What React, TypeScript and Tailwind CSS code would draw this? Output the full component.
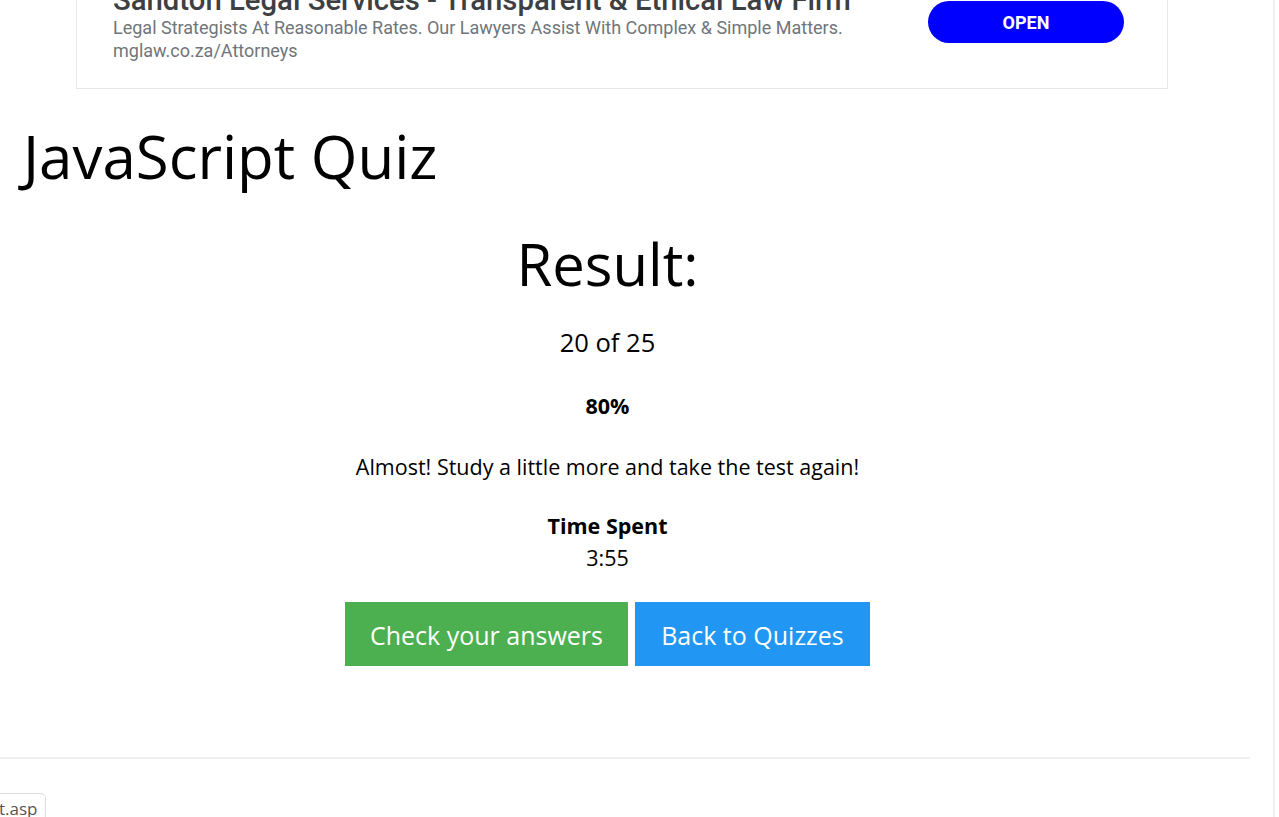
import { useState } from 'react';

const ad = {
  title: 'Sandton Legal Services - Transparent & Ethical Law Firm',
  text: 'Legal Strategists At Reasonable Rates. Our Lawyers Assist With Complex & Simple Matters.',
  url: 'mglaw.co.za/Attorneys',
};

const result = {
  score: 20,
  total: 25,
  time: '3:55',
};

export default function App() {
  const [hover, setHover] = useState<string | null>(null);
  const percent = Math.round((result.score / result.total) * 100);

  return (
    <div className="flex h-[817px] overflow-hidden bg-white text-black" style={{ fontFamily: '"Open Sans", "Noto Sans", sans-serif' }}>
      <div className="w-[1273px] shrink-0">
        {/* Ad */}
        <div className="ml-[76px] -mt-[20px] flex h-[109px] w-[1092px] items-start border border-[#e6e6e6] bg-white" style={{ fontFamily: 'Roboto, "Liberation Sans", sans-serif' }}>
          <div className="flex-1 pl-[36px] pt-[3px]">
            <div className="text-[29.3px] leading-[32px] font-medium text-[#3c4043] whitespace-nowrap">{ad.title}</div>
            <div className="text-[18px] leading-[23px] text-[#70757a] whitespace-nowrap">{ad.text}</div>
            <div className="text-[18px] leading-[23px] text-[#70757a]">{ad.url}</div>
          </div>
          <div className="mr-[43px] mt-[20px]">
            <button className="h-[42px] w-[196px] rounded-full bg-[#0000ff] text-[18px] font-bold text-white">
              OPEN
            </button>
          </div>
        </div>

        {/* Heading */}
        <h1 className="mt-[27px] pl-[23px] text-[60px] leading-[80px] font-normal">JavaScript Quiz</h1>

        {/* Result */}
        <div className="w-[1215px] text-center">
          <h2 className="mt-[23px] text-[58px] leading-[90px]">Result:</h2>
          <p className="mt-[17px] text-[25.5px] leading-[32px]">
            {result.score} of {result.total}
          </p>
          <p className="mt-[34px] text-[21.5px] leading-[28px] font-bold">{percent}%</p>
          <p className="mt-[33px] text-[21.5px] leading-[28px]">Almost! Study a little more and take the test again!</p>
          <p className="mt-[31px] text-[21.5px] leading-[28px] font-bold">Time Spent</p>
          <p className="mt-[4px] text-[21.5px] leading-[28px]">{result.time}</p>
          <div className="mt-[30px] flex justify-center gap-[7px]">
            <button
              onMouseEnter={() => setHover('check')}
              onMouseLeave={() => setHover(null)}
              className={`h-[64px] w-[283px] pt-[3px] text-[25px] text-white ${hover === 'check' ? 'bg-[#3e8e41]' : 'bg-[#4caf50]'}`}
            >
              Check your answers
            </button>
            <button
              onMouseEnter={() => setHover('back')}
              onMouseLeave={() => setHover(null)}
              className={`h-[64px] w-[235px] pt-[3px] text-[25px] text-white ${hover === 'back' ? 'bg-[#0b7dda]' : 'bg-[#2196f3]'}`}
            >
              Back to Quizzes
            </button>
          </div>
        </div>

        {/* Footer */}
        <hr className="mt-[91px] w-[1250px] border-t-2 border-[#eef0f1]" />
        <div className="mt-[34px] -ml-[10px] inline-block rounded-[5px] border border-[#dddddd] px-[8px] pt-[3px] text-[17px] leading-[24px] text-[#555555]">
          t.asp
        </div>
      </div>
      <div className="flex-1 border-l-2 border-[#f0f0f0]" />
    </div>
  );
}
